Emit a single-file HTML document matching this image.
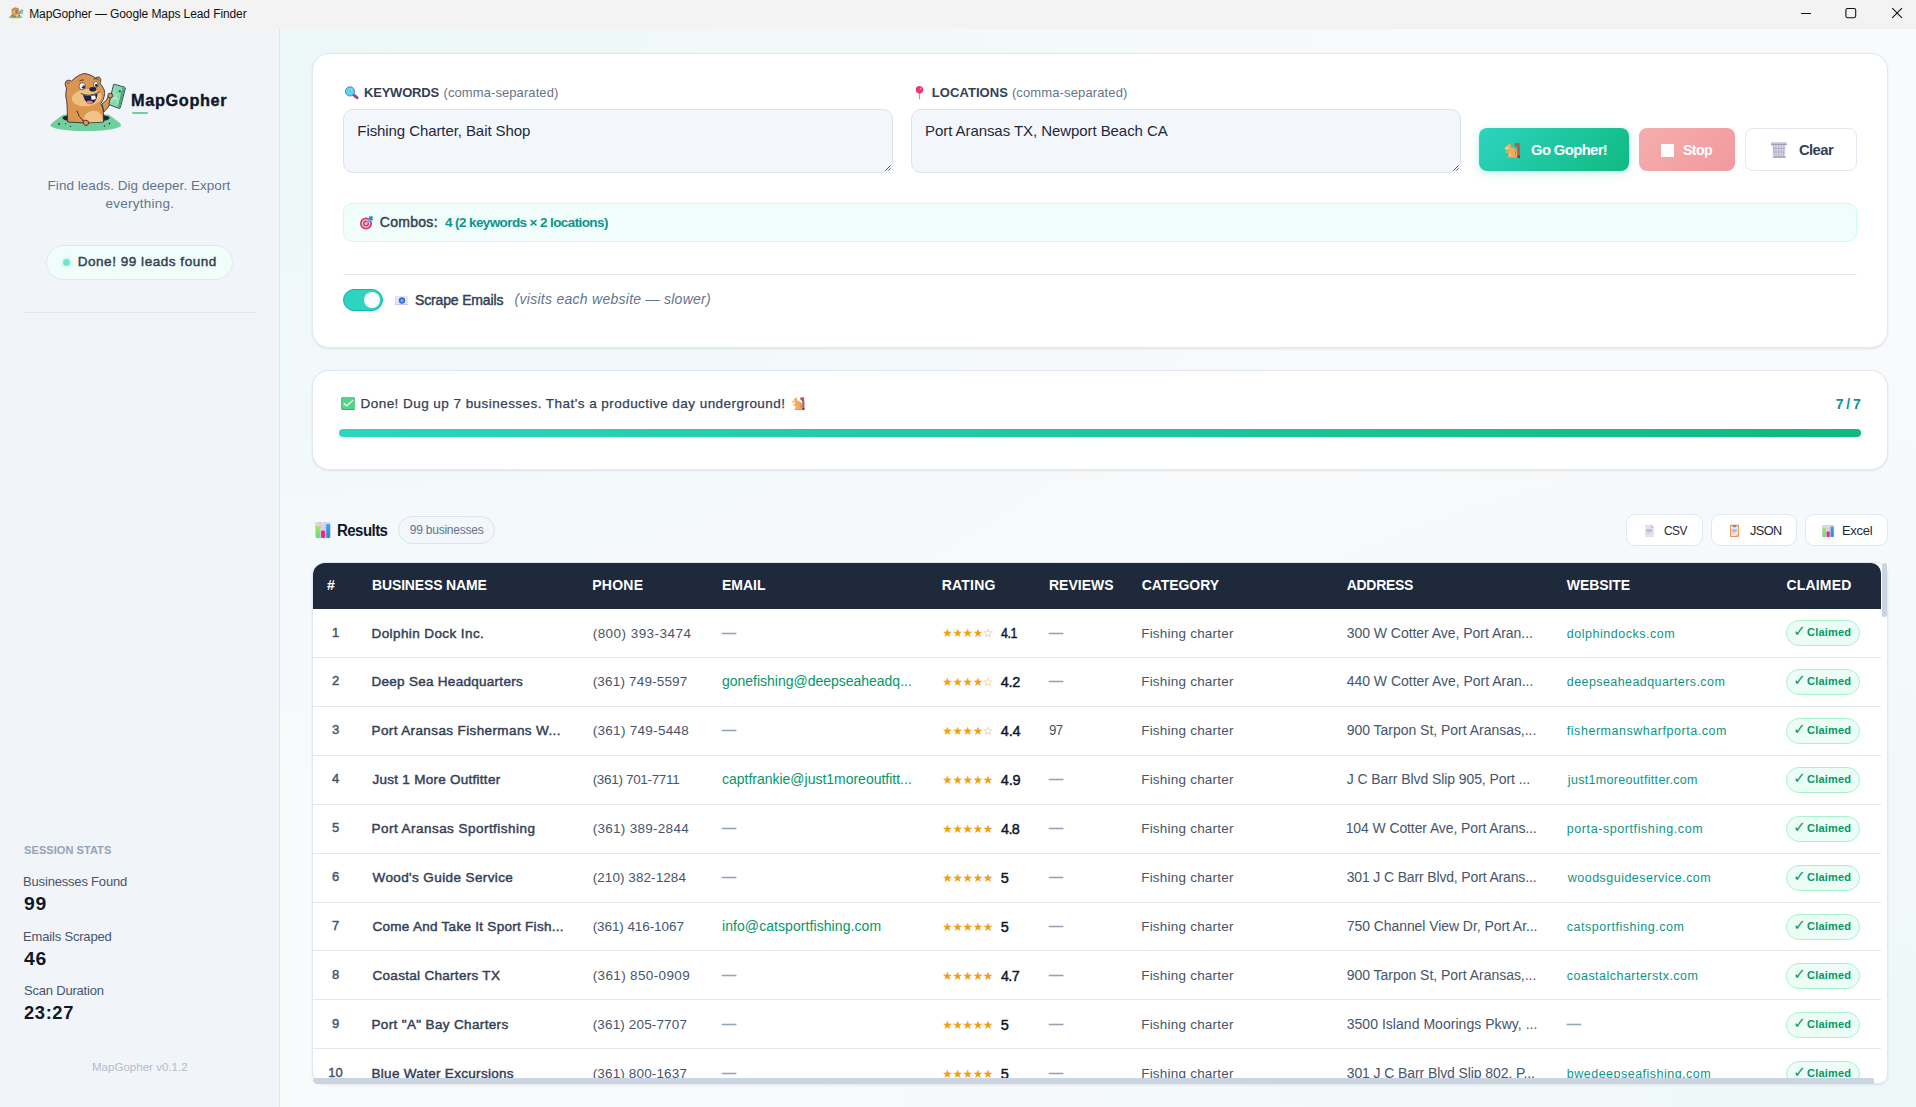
<!DOCTYPE html>
<html lang="en">
<head>
<meta charset="utf-8">
<title>MapGopher — Google Maps Lead Finder</title>
<style>
*{box-sizing:border-box;margin:0;padding:0}
html,body{width:1916px;height:1107px;overflow:hidden;background:#f8fafc}
body{font-family:"Liberation Sans",sans-serif;color:#334155;position:relative}
.a{position:absolute}
.t{position:absolute;white-space:nowrap;line-height:1}
#titlebar{position:absolute;left:0;top:0;width:1916px;height:29px;background:#f3f3f3}
#sidebar{position:absolute;left:0;top:29px;width:280px;height:1078px;background:#f1f4f9;border-right:1px solid #dfe4ee}
#main{position:absolute;left:280px;top:29px;width:1636px;height:1078px;background:radial-gradient(ellipse 1150px 760px at 0 0,rgba(45,212,191,.06),rgba(45,212,191,0) 100%),radial-gradient(ellipse 1150px 760px at 100% 100%,rgba(45,212,191,.05),rgba(45,212,191,0) 100%),#f8fafc}
.card{position:absolute;background:#fff;border:1px solid #e1e7ef;box-shadow:0 1px 3px rgba(15,23,42,.06),0 1px 2px rgba(15,23,42,.03)}
.ta{position:absolute;background:#f3f6fa;border:1px solid #dde3ec;border-radius:10px}
.rl{position:absolute;left:313px;width:1568px;height:1px;background:#e2e8f0}
.badge{position:absolute;left:1786px;width:74px;height:26px;border-radius:13px;background:#ecfdf5;border:1px solid #a7f3d0}
.xb{position:absolute;top:514px;height:32px;background:#fff;border:1px solid #e2e8f0;border-radius:9px}
svg{position:absolute;overflow:visible}
</style>
</head>
<body>
<div id="titlebar"></div>
<div id="sidebar"></div>
<div id="main"></div>

<!-- cards -->
<div class='card' style='left:312px;top:53px;width:1576px;height:295px;border-radius:17px'></div>
<div class='card' style='left:312px;top:370px;width:1576px;height:100px;border-radius:17px'></div>
<div class='card' style='left:312px;top:562px;width:1576px;height:522px;border-radius:13px 13px 9px 13px'></div>
<!-- sidebar pill -->
<div class='a' style='left:46px;top:245px;width:187px;height:35px;border-radius:18px;background:#f0fdfa;border:1px solid #e0e8ef'></div>
<div class='a' style='left:63.3px;top:259.4px;width:6.4px;height:6.4px;border-radius:4px;background:#6ee7d0;box-shadow:0 0 4px #99f6e4'></div>
<div class='a' style='left:24px;top:312px;width:232px;height:1px;background:#e2e8f0'></div>
<div class='a' style='left:132px;top:112px;width:16px;height:2px;border-radius:1px;background:#6fd09c'></div>
<!-- textareas -->
<div class='ta' style='left:343px;top:109px;width:550px;height:64px'></div>
<div class='ta' style='left:911px;top:109px;width:550px;height:64px'></div>
<svg width='1916' height='200' style='left:0;top:0'><path d='M885.5,170.5L890.5,165.5M888.5,170.5L890.5,168.5M1453.5,170.5L1458.5,165.5M1456.5,170.5L1458.5,168.5' stroke='#3b3f46' stroke-width='.9'/></svg>
<!-- buttons -->
<div class='a' style='left:1479px;top:128px;width:150px;height:43px;border-radius:8px;background:linear-gradient(135deg,#2dd4bf,#10b981);box-shadow:0 2px 9px rgba(20,184,166,.26)'></div>
<div class='a' style='left:1639px;top:128px;width:96px;height:43px;border-radius:8px;background:linear-gradient(135deg,#f6adad,#f19a9d)'></div>
<div class='a' style='left:1745px;top:128px;width:112px;height:43px;border-radius:8px;background:#fff;border:1px solid #e2e8f0'></div>
<div class='a' style='left:1661.3px;top:144px;width:12.9px;height:13px;background:#fff'></div>
<!-- combos -->
<div class='a' style='left:343px;top:203px;width:1514px;height:39px;border-radius:9px;background:#f0fdfa;border:1px solid #ccfbf1'></div>
<div class='a' style='left:343px;top:274px;width:1514px;height:1px;background:#e2e8f0'></div>
<!-- toggle -->
<div class='a' style='left:343px;top:289px;width:40px;height:22px;border-radius:11px;background:#2dd4bf;border:1px solid #19b5a3'></div>
<div class='a' style='left:364px;top:292px;width:16px;height:16px;border-radius:8px;background:#fff'></div>
<!-- progress -->
<div class='a' style='left:339px;top:429px;width:1522px;height:8px;border-radius:4px;background:linear-gradient(90deg,#2dd4bf,#10b981)'></div>
<!-- results header -->
<div class='a' style='left:398px;top:516px;width:97px;height:28px;border-radius:14px;background:#f3f6fa;border:1px solid #dde4ed'></div>
<div class='xb' style='left:1626px;width:77px'></div>
<div class='xb' style='left:1711px;width:86px'></div>
<div class='xb' style='left:1805px;width:83px'></div>
<!-- table header -->
<div class='a' style='left:313px;top:563px;width:1568px;height:46px;background:#1e293b;border-radius:12px 10px 0 0'></div>
<svg width='1916' height='1107' style='left:0;top:0' viewBox='0 0 1916 1107'><defs><linearGradient id='gG' x1='0' y1='0' x2='0' y2='1'><stop offset='0' stop-color='#a6e857'/><stop offset='1' stop-color='#62dc8c'/></linearGradient><linearGradient id='gB' x1='0' y1='0' x2='0' y2='1'><stop offset='0' stop-color='#34a7f6'/><stop offset='1' stop-color='#3a80d8'/></linearGradient></defs><g>
<path d='M50.6,126.2 Q50,124.6 52,123 L61.8,115.6 Q63.2,114.5 65.2,114.5 L106.8,114.5 Q108.8,114.5 110.3,115.7 L119.8,123 Q121.6,124.6 120.8,126.2 Q114,130.9 85.6,130.9 Q57,130.9 50.6,126.2 Z' fill='#6fd09c'/>
<ellipse cx='86' cy='118' rx='23.6' ry='4.3' fill='#1b2444'/>
<circle cx='59' cy='124' r='.9' fill='#1b2444'/><circle cx='65.5' cy='123.8' r='.6' fill='#1b2444'/><circle cx='70.5' cy='126.3' r='.6' fill='#1b2444'/><circle cx='104.5' cy='126' r='.7' fill='#1b2444'/><circle cx='109.5' cy='123.6' r='.8' fill='#1b2444'/>
<path d='M102,104 Q107,101 108.8,95.5 L112.4,97 Q112,104 103.8,112 Z' fill='#db9650' stroke='#2c2340' stroke-width='.85' stroke-linejoin='round'/>
<path d='M67.8,122 C67,112 67.4,106 66.6,100.5 C65.4,97 65.6,93 66.6,88 C65.4,86.5 64.6,83.5 65.8,81.6 C67.2,79.6 70,80 71.4,81.2 C74.5,78 79,74.6 84,73.5 C88.5,73.8 92.5,76 95.6,78 C96.8,76.6 99.4,76.6 100.4,78.4 C101.2,80 100.6,82 99.8,83 C102.6,86.5 105.2,90.5 104.6,93.5 C104.4,98 102.4,101.5 100.6,103.8 C103,107 103.8,111 103.6,122 Q86,124 67.8,122 Z' fill='#db9650' stroke='#2c2340' stroke-width='.85' stroke-linejoin='round'/>
<circle cx='68.2' cy='83' r='1.6' fill='#b9743a'/><circle cx='98.4' cy='79.8' r='1.3' fill='#b9743a'/>
<ellipse cx='86.8' cy='97.6' rx='15' ry='8.6' transform='rotate(-6 86.8 97.6)' fill='#efc07f'/>
<path d='M83,121.8 Q83.5,111.5 93.5,110.4 Q102.5,111 103,121.6 Q93,123 83,121.8 Z' fill='#f0c385'/>
<ellipse cx='82.3' cy='86.3' rx='3.2' ry='3.5' fill='#fff' stroke='#1b2444' stroke-width='.6'/>
<circle cx='83.4' cy='87' r='1.8' fill='#1b2444'/><circle cx='82.8' cy='86.2' r='.6' fill='#fff'/>
<ellipse cx='95.9' cy='84.6' rx='2.2' ry='3' fill='#fff' stroke='#1b2444' stroke-width='.6'/>
<circle cx='96.4' cy='85.4' r='1.4' fill='#1b2444'/>
<path d='M79.6,81 Q81.4,79.4 83.4,80' stroke='#1b2444' stroke-width='.8' fill='none' stroke-linecap='round'/>
<path d='M94,79 Q95.6,78 97.4,79' stroke='#1b2444' stroke-width='.8' fill='none' stroke-linecap='round'/>
<ellipse cx='92.8' cy='89.3' rx='3.4' ry='2.3' fill='#1b2444'/>
<path d='M81,93.6 Q89,97.8 99.4,92' stroke='#1b2444' stroke-width='.8' fill='none' stroke-linecap='round'/><path d='M83,94.8 Q89.4,97.4 97.6,93.4 Q96.6,103.2 90,104.2 Q85,103.4 83,94.8 Z' fill='#1b2444'/>
<ellipse cx='89.6' cy='102.2' rx='3.1' ry='1.7' fill='#f07a7a'/>
<rect x='91.3' y='95.6' width='4.3' height='3.9' rx='.6' transform='rotate(-8 93.4 97.5)' fill='#fff'/>
<path d='M76.8,110.6 Q78.5,117 83.5,121' stroke='#2c2340' stroke-width='.85' fill='none'/>
<path d='M83.2,120.4 Q86,119.4 88.4,121.4 Q89.6,123.6 87.2,125.4 Q84.4,126 83.4,123.4 Z' fill='#db9650' stroke='#2c2340' stroke-width='.85'/>
<path d='M114.6,84.3 L124.6,87.2 Q125.6,87.6 125.3,88.7 L120.3,107.6 Q119.9,108.8 118.8,108.4 L109.6,104.8 Q108.7,104.4 109,103.4 L113.4,85 Q113.7,84 114.6,84.3 Z' fill='#86d9aa' stroke='#1b2444' stroke-width='.8' stroke-linejoin='round'/>
<path d='M122.6,87 L125,87.8 L119.9,108 L117.6,107.2 Z' fill='#3fae78'/>
<path d='M111,102 L121.6,90 M113.4,90 L118.4,104.6 M110.6,98 L120,99' stroke='#e7faef' stroke-width='.5' fill='none'/>
<circle cx='119.8' cy='91.4' r='1.1' fill='#1b2444'/><circle cx='119.8' cy='91.4' r='.4' fill='#e7faef'/>
<circle cx='110.2' cy='95.6' r='2.4' fill='#db9650' stroke='#2c2340' stroke-width='.85'/>
</g><g transform='translate(8.8,7.4) scale(0.19) translate(-50.2,-73.5)'>
<path d='M50.6,126.2 Q50,124.6 52,123 L61.8,115.6 Q63.2,114.5 65.2,114.5 L106.8,114.5 Q108.8,114.5 110.3,115.7 L119.8,123 Q121.6,124.6 120.8,126.2 Q114,130.9 85.6,130.9 Q57,130.9 50.6,126.2 Z' fill='#6fd09c'/>
<ellipse cx='86' cy='118' rx='23.6' ry='4.3' fill='#1b2444'/>
<circle cx='59' cy='124' r='.9' fill='#1b2444'/><circle cx='65.5' cy='123.8' r='.6' fill='#1b2444'/><circle cx='70.5' cy='126.3' r='.6' fill='#1b2444'/><circle cx='104.5' cy='126' r='.7' fill='#1b2444'/><circle cx='109.5' cy='123.6' r='.8' fill='#1b2444'/>
<path d='M102,104 Q107,101 108.8,95.5 L112.4,97 Q112,104 103.8,112 Z' fill='#db9650' stroke='#2c2340' stroke-width='.85' stroke-linejoin='round'/>
<path d='M67.8,122 C67,112 67.4,106 66.6,100.5 C65.4,97 65.6,93 66.6,88 C65.4,86.5 64.6,83.5 65.8,81.6 C67.2,79.6 70,80 71.4,81.2 C74.5,78 79,74.6 84,73.5 C88.5,73.8 92.5,76 95.6,78 C96.8,76.6 99.4,76.6 100.4,78.4 C101.2,80 100.6,82 99.8,83 C102.6,86.5 105.2,90.5 104.6,93.5 C104.4,98 102.4,101.5 100.6,103.8 C103,107 103.8,111 103.6,122 Q86,124 67.8,122 Z' fill='#db9650' stroke='#2c2340' stroke-width='.85' stroke-linejoin='round'/>
<circle cx='68.2' cy='83' r='1.6' fill='#b9743a'/><circle cx='98.4' cy='79.8' r='1.3' fill='#b9743a'/>
<ellipse cx='86.8' cy='97.6' rx='15' ry='8.6' transform='rotate(-6 86.8 97.6)' fill='#efc07f'/>
<path d='M83,121.8 Q83.5,111.5 93.5,110.4 Q102.5,111 103,121.6 Q93,123 83,121.8 Z' fill='#f0c385'/>
<ellipse cx='82.3' cy='86.3' rx='3.2' ry='3.5' fill='#fff' stroke='#1b2444' stroke-width='.6'/>
<circle cx='83.4' cy='87' r='1.8' fill='#1b2444'/><circle cx='82.8' cy='86.2' r='.6' fill='#fff'/>
<ellipse cx='95.9' cy='84.6' rx='2.2' ry='3' fill='#fff' stroke='#1b2444' stroke-width='.6'/>
<circle cx='96.4' cy='85.4' r='1.4' fill='#1b2444'/>
<path d='M79.6,81 Q81.4,79.4 83.4,80' stroke='#1b2444' stroke-width='.8' fill='none' stroke-linecap='round'/>
<path d='M94,79 Q95.6,78 97.4,79' stroke='#1b2444' stroke-width='.8' fill='none' stroke-linecap='round'/>
<ellipse cx='92.8' cy='89.3' rx='3.4' ry='2.3' fill='#1b2444'/>
<path d='M81,93.6 Q89,97.8 99.4,92' stroke='#1b2444' stroke-width='.8' fill='none' stroke-linecap='round'/><path d='M83,94.8 Q89.4,97.4 97.6,93.4 Q96.6,103.2 90,104.2 Q85,103.4 83,94.8 Z' fill='#1b2444'/>
<ellipse cx='89.6' cy='102.2' rx='3.1' ry='1.7' fill='#f07a7a'/>
<rect x='91.3' y='95.6' width='4.3' height='3.9' rx='.6' transform='rotate(-8 93.4 97.5)' fill='#fff'/>
<path d='M76.8,110.6 Q78.5,117 83.5,121' stroke='#2c2340' stroke-width='.85' fill='none'/>
<path d='M83.2,120.4 Q86,119.4 88.4,121.4 Q89.6,123.6 87.2,125.4 Q84.4,126 83.4,123.4 Z' fill='#db9650' stroke='#2c2340' stroke-width='.85'/>
<path d='M114.6,84.3 L124.6,87.2 Q125.6,87.6 125.3,88.7 L120.3,107.6 Q119.9,108.8 118.8,108.4 L109.6,104.8 Q108.7,104.4 109,103.4 L113.4,85 Q113.7,84 114.6,84.3 Z' fill='#86d9aa' stroke='#1b2444' stroke-width='.8' stroke-linejoin='round'/>
<path d='M122.6,87 L125,87.8 L119.9,108 L117.6,107.2 Z' fill='#3fae78'/>
<path d='M111,102 L121.6,90 M113.4,90 L118.4,104.6 M110.6,98 L120,99' stroke='#e7faef' stroke-width='.5' fill='none'/>
<circle cx='119.8' cy='91.4' r='1.1' fill='#1b2444'/><circle cx='119.8' cy='91.4' r='.4' fill='#e7faef'/>
<circle cx='110.2' cy='95.6' r='2.4' fill='#db9650' stroke='#2c2340' stroke-width='.85'/>
</g><path d='M1801,13.5H1811' stroke='#111' stroke-width='1'/><rect x='1845.9' y='8.5' width='9.8' height='9.2' rx='1.6' fill='none' stroke='#111' stroke-width='1.1'/><path d='M1892.2,8.1L1902,17.9M1902,8.1L1892.2,17.9' stroke='#111' stroke-width='1.1'/><path d='M353.6,94.9L357,97.7' stroke='#8a4a94' stroke-width='3' stroke-linecap='round'/><circle cx='350' cy='91.4' r='4.6' fill='#62d3ee' stroke='#5a6fc0' stroke-width='.9'/><circle cx='351.6' cy='89.4' r='.9' fill='#a8e4f6'/><path d='M919.5,93V98.8' stroke='#aa9cc4' stroke-width='1.2' stroke-linecap='round'/><circle cx='919.5' cy='89.8' r='3.7' fill='#ee356f'/><circle cx='920.6' cy='88.4' r='.9' fill='#f9a3bd'/><path d='M1514.60,143.90 Q1515.20,143.00 1517.00,143.10 L1518.80,143.10 Q1520.00,143.30 1519.80,144.70 L1519.60,146.10 Q1520.00,147.10 1520.00,148.10 L1520.00,157.70 L1517.20,157.70 L1517.20,148.10 Q1517.00,146.70 1515.60,146.50 Q1514.20,145.90 1514.60,143.90 Z' fill='#a4625c'/><rect x='1517.20' y='155.50' width='2.80' height='2.40' fill='#8e2f5a'/><path d='M1508.00,157.90 L1517.20,157.90 L1517.20,151.70 Q1516.40,148.30 1513.40,147.70 L1511.20,147.30 L1510.40,143.90 Q1509.60,142.90 1508.80,143.90 L1507.40,145.30 Q1505.20,146.70 1504.80,148.30 Q1504.40,149.30 1505.20,149.70 L1508.40,149.90 L1508.20,150.90 L1505.60,151.30 Q1504.80,152.10 1505.80,152.70 L1508.40,152.70 L1508.60,156.50 L1507.40,157.10 Z' fill='#f3aa58'/><ellipse cx='1506.90' cy='148.10' rx='1.70' ry='1.60' fill='#f8cf9f'/><rect x='1508.60' y='152.70' width='2.40' height='4.40' fill='#f4b48a'/><rect x='1515.20' y='150.10' width='0.90' height='5.60' fill='#c7775a'/><rect x='1507.20' y='157.00' width='10.00' height='1.00' rx='.4' fill='#f98f3c'/><path d='M800.16,397.84 Q800.63,397.06 802.05,397.15 L803.47,397.15 Q804.41,397.32 804.25,398.54 L804.10,399.76 Q804.41,400.63 804.41,401.50 L804.41,409.85 L802.20,409.85 L802.20,401.50 Q802.05,400.28 800.94,400.11 Q799.84,399.58 800.16,397.84 Z' fill='#a4625c'/><rect x='802.20' y='407.94' width='2.21' height='2.09' fill='#8e2f5a'/><path d='M794.95,410.03 L802.20,410.03 L802.20,404.63 Q801.57,401.67 799.21,401.15 L797.48,400.80 L796.84,397.84 Q796.21,396.97 795.58,397.84 L794.48,399.06 Q792.75,400.28 792.43,401.67 Q792.12,402.54 792.75,402.89 L795.27,403.06 L795.11,403.94 L793.06,404.28 Q792.43,404.98 793.22,405.50 L795.27,405.50 L795.43,408.81 L794.48,409.33 Z' fill='#f3aa58'/><ellipse cx='794.09' cy='401.50' rx='1.34' ry='1.39' fill='#f8cf9f'/><rect x='795.43' y='405.50' width='1.89' height='3.83' fill='#f4b48a'/><rect x='800.63' y='403.24' width='0.71' height='4.87' fill='#c7775a'/><rect x='794.32' y='409.24' width='7.88' height='0.87' rx='.4' fill='#f98f3c'/><path d='M1772.2,144.6L1785.6,144.6L1784.9,156.4L1773.2,156.4Z' fill='#dcd7ea'/><path d='M1773.4,145L1774.2,156M1775.8,145L1776.2,156M1778.6,145V156M1781.4,145L1781,156M1784,145L1783.4,156M1773,148.4H1785M1773.2,152H1784.8' stroke='#a9a2c2' stroke-width='.7' fill='none'/><rect x='1771' y='142.3' width='15.8' height='2.6' rx='.8' fill='#c4c0d2'/><rect x='1771' y='144' width='15.8' height='.9' fill='#9d96b8'/><rect x='1772.8' y='156' width='12.8' height='1.9' rx='.5' fill='#b3adc8'/><circle cx='366' cy='223.5' r='6' fill='#e8325c'/><circle cx='366' cy='223.5' r='4.3' fill='#dcd2e8'/><circle cx='366' cy='223.5' r='3' fill='#e8325c'/><circle cx='366' cy='223.5' r='1.5' fill='#dcd2e8'/><path d='M366,223.5L368,221.5' stroke='#8a8f9c' stroke-width='.8'/><path d='M367.6,222L370.4,219.2' stroke='#45c3f5' stroke-width='2.4' stroke-linecap='round'/><path d='M369.6,216.6L370,219.4L372.8,220L371.6,218.2L372.6,216.8L370.8,217Z' fill='#2b7de0' stroke='#2b7de0' stroke-width='1' stroke-linejoin='round'/><rect x='395' y='296' width='13.1' height='8.9' rx='.8' fill='#ece3f7'/><rect x='395' y='304' width='13.1' height='.9' fill='#d9b8f3'/><rect x='395' y='296' width='.8' height='8.9' fill='#e3cfe0'/><circle cx='402' cy='300.5' r='3.2' fill='#2c70d6'/><circle cx='402' cy='300.5' r='1.5' fill='#a9b4e6'/><circle cx='402' cy='300.5' r='.6' fill='#2c70d6'/><rect x='341.2' y='396.9' width='13.8' height='13.1' rx='1.6' fill='#2f9f66'/><rect x='341.6' y='396.9' width='13.4' height='12.3' rx='1.5' fill='#54d48b'/><path d='M344.1,403.4L346.95,405.9L352.7,400.4' stroke='#fff' stroke-width='1.3' fill='none' stroke-linecap='round' stroke-linejoin='round'/><rect x='315.05' y='521.90' width='15.65' height='16.00' rx='1.20' fill='#ddd6e7'/><path d='M320.33,521.90V537.90M325.42,521.90V537.90M315.05,527.30H330.70M315.05,532.70H330.70' stroke='#c9c1d6' stroke-width='0.60'/><rect x='315.95' y='525.90' width='3.99' height='12.00' rx='0.80' fill='url(#gG)'/><rect x='321.03' y='530.60' width='3.99' height='7.30' rx='0.80' fill='#ea2f78'/><rect x='326.21' y='524.00' width='3.89' height='13.90' rx='0.80' fill='url(#gB)'/><rect x='1821.90' y='524.90' width='12.30' height='12.10' rx='0.94' fill='#ddd6e7'/><path d='M1826.05,524.90V537.00M1830.05,524.90V537.00M1821.90,528.98H1834.20M1821.90,533.07H1834.20' stroke='#c9c1d6' stroke-width='0.47'/><rect x='1822.61' y='527.92' width='3.13' height='9.07' rx='0.63' fill='url(#gG)'/><rect x='1826.60' y='531.48' width='3.13' height='5.52' rx='0.63' fill='#ea2f78'/><rect x='1830.67' y='526.49' width='3.06' height='10.51' rx='0.63' fill='url(#gB)'/><path d='M1645,524.8H1651.4L1654.1,527.6V537H1645Z' fill='#e6dff2'/><path d='M1651.2,524.8L1654.1,527.8H1651.2Z' fill='#bdb5cc'/><rect x='1646.6' y='529.3' width='5.4' height='2.4' fill='#bbb4c8'/><rect x='1646.6' y='532.5' width='3.5' height='1.1' fill='#cfc7dc'/><rect x='1730' y='524.8' width='8.9' height='12.2' rx='.8' fill='#e8974b'/><path d='M1731,526.2H1737.9V534.4L1736.2,536H1731Z' fill='#ece8f8'/><rect x='1732.8' y='524.9' width='3.4' height='2.3' rx='.9' fill='#8c8596'/><rect x='1732.2' y='529.2' width='4.6' height='2.8' fill='#bcb5c6'/><rect x='1732.2' y='532.8' width='3' height='1' fill='#cfc9da'/></svg>
<div class='a' style='left:0;top:0;width:1916px;height:1078px;overflow:hidden'>
<div class='badge' style='top:620.0px'></div><div class='badge' style='top:669.0px'></div><div class='rl' style='top:657.0px'></div><div class='badge' style='top:718.0px'></div><div class='rl' style='top:705.9px'></div><div class='badge' style='top:767.0px'></div><div class='rl' style='top:754.8px'></div><div class='badge' style='top:816.0px'></div><div class='rl' style='top:803.7px'></div><div class='badge' style='top:865.0px'></div><div class='rl' style='top:852.6px'></div><div class='badge' style='top:914.0px'></div><div class='rl' style='top:901.5px'></div><div class='badge' style='top:963.0px'></div><div class='rl' style='top:950.4px'></div><div class='badge' style='top:1012.0px'></div><div class='rl' style='top:999.3px'></div><div class='badge' style='top:1061.0px'></div><div class='rl' style='top:1048.2px'></div>
<div class='t ' style='left:29.20px;top:8.00px;font-size:12px;font-weight:400;color:#111;letter-spacing:-0.097px;'>MapGopher — Google Maps Lead Finder</div>
<div class='t ' style='left:131.05px;top:93.00px;font-size:15.6px;font-weight:700;color:#0f172a;letter-spacing:0.600px;transform:scaleX(1.0458);transform-origin:0 0;-webkit-text-stroke:.35px;'>MapGopher</div>
<div class='t ' style='left:47.60px;top:179.00px;font-size:13.5px;font-weight:400;color:#64748b;letter-spacing:0.033px;'>Find leads. Dig deeper. Export</div>
<div class='t ' style='left:105.60px;top:197.00px;font-size:13.5px;font-weight:400;color:#64748b;letter-spacing:0.231px;'>everything.</div>
<div class='t ' style='left:77.75px;top:255.00px;font-size:13.5px;font-weight:400;color:#334155;letter-spacing:0.535px;-webkit-text-stroke:.45px;'>Done! 99 leads found</div>
<div class='t ' style='left:24.10px;top:845.00px;font-size:11px;font-weight:700;color:#94a3b8;letter-spacing:0.063px;'>SESSION STATS</div>
<div class='t ' style='left:23.10px;top:875.00px;font-size:13px;font-weight:400;color:#475569;letter-spacing:-0.188px;'>Businesses Found</div>
<div class='t ' style='left:24.10px;top:896.00px;font-size:17.5px;font-weight:700;color:#0f172a;letter-spacing:0.600px;transform:scaleX(1.1066);transform-origin:0 0;'>99</div>
<div class='t ' style='left:23.10px;top:930.00px;font-size:13px;font-weight:400;color:#475569;letter-spacing:-0.185px;'>Emails Scraped</div>
<div class='t ' style='left:24.10px;top:951.00px;font-size:17.5px;font-weight:700;color:#0f172a;letter-spacing:0.600px;transform:scaleX(1.1066);transform-origin:0 0;'>46</div>
<div class='t ' style='left:24.10px;top:984.00px;font-size:13px;font-weight:400;color:#475569;letter-spacing:-0.212px;'>Scan Duration</div>
<div class='t ' style='left:24.10px;top:1005.00px;font-size:17.5px;font-weight:700;color:#0f172a;letter-spacing:0.600px;transform:scaleX(1.0468);transform-origin:0 0;'>23:27</div>
<div class='t ' style='left:92.00px;top:1062.00px;font-size:11.5px;font-weight:400;color:#b3bccb;letter-spacing:0.023px;'>MapGopher v0.1.2</div>
<div class='t ' style='left:364.00px;top:86.00px;font-size:13px;font-weight:700;color:#334155;letter-spacing:-0.213px;'>KEYWORDS</div>
<div class='t ' style='left:443.50px;top:86.00px;font-size:13px;font-weight:400;color:#64748b;letter-spacing:0.088px;'>(comma-separated)</div>
<div class='t ' style='left:931.80px;top:86.00px;font-size:13px;font-weight:700;color:#334155;letter-spacing:0.060px;'>LOCATIONS</div>
<div class='t ' style='left:1011.90px;top:86.00px;font-size:13px;font-weight:400;color:#64748b;letter-spacing:0.125px;'>(comma-separated)</div>
<div class='t ' style='left:357.30px;top:123.00px;font-size:15px;font-weight:400;color:#1e293b;letter-spacing:-0.082px;'>Fishing Charter, Bait Shop</div>
<div class='t ' style='left:925.00px;top:123.00px;font-size:15px;font-weight:400;color:#1e293b;letter-spacing:-0.066px;'>Port Aransas TX, Newport Beach CA</div>
<div class='t ' style='left:1531.20px;top:142.00px;font-size:15px;font-weight:700;color:#fff;letter-spacing:-0.600px;transform:scaleX(0.9853);transform-origin:0 0;'>Go Gopher!</div>
<div class='t ' style='left:1683.00px;top:142.00px;font-size:15px;font-weight:700;color:#fff;letter-spacing:-0.600px;transform:scaleX(0.9406);transform-origin:0 0;'>Stop</div>
<div class='t ' style='left:1798.50px;top:142.00px;font-size:15px;font-weight:700;color:#334155;letter-spacing:-0.600px;transform:scaleX(0.9863);transform-origin:0 0;'>Clear</div>
<div class='t ' style='left:379.85px;top:215.00px;font-size:14px;font-weight:400;color:#334155;letter-spacing:0.278px;-webkit-text-stroke:.45px;'>Combos:</div>
<div class='t ' style='left:444.70px;top:216.00px;font-size:13.5px;font-weight:700;color:#0d9488;letter-spacing:-0.600px;transform:scaleX(0.9994);transform-origin:0 0;'>4 (2 keywords × 2 locations)</div>
<div class='t ' style='left:414.95px;top:293.00px;font-size:14px;font-weight:400;color:#334155;letter-spacing:-0.146px;-webkit-text-stroke:.45px;'>Scrape Emails</div>
<div class='t ' style='left:514.60px;top:292.00px;font-size:14px;font-weight:400;color:#64748b;letter-spacing:0.269px;font-style:italic;'>(visits each website — slower)</div>
<div class='t ' style='left:360.50px;top:397.00px;font-size:13.5px;font-weight:400;color:#334155;letter-spacing:0.454px;-webkit-text-stroke:.25px;'>Done! Dug up 7 businesses. That&#x27;s a productive day underground!</div>
<div class='t ' style='left:1835.80px;top:397.00px;font-size:14px;font-weight:700;color:#0d9488;letter-spacing:-0.564px;'>7 / 7</div>
<div class='t ' style='left:336.76px;top:523.00px;font-size:16px;font-weight:700;color:#0f172a;letter-spacing:-0.600px;transform:scaleX(0.9400);transform-origin:0 0;'>Results</div>
<div class='t ' style='left:409.70px;top:524.00px;font-size:12px;font-weight:400;color:#64748b;letter-spacing:-0.218px;'>99 businesses</div>
<div class='t ' style='left:1664.00px;top:524.00px;font-size:13px;font-weight:400;color:#1e293b;letter-spacing:-0.600px;transform:scaleX(0.9126);transform-origin:0 0;'>CSV</div>
<div class='t ' style='left:1749.60px;top:524.00px;font-size:13px;font-weight:400;color:#1e293b;letter-spacing:-0.600px;transform:scaleX(0.9790);transform-origin:0 0;'>JSON</div>
<div class='t ' style='left:1842.00px;top:524.00px;font-size:13px;font-weight:400;color:#1e293b;letter-spacing:-0.300px;'>Excel</div>
<div class='t ' style='left:327.00px;top:578.00px;font-size:14px;font-weight:700;color:#fff;'>#</div>
<div class='t ' style='left:372.10px;top:578.00px;font-size:14px;font-weight:700;color:#fff;letter-spacing:-0.170px;'>BUSINESS NAME</div>
<div class='t ' style='left:592.30px;top:578.00px;font-size:14px;font-weight:700;color:#fff;letter-spacing:0.238px;'>PHONE</div>
<div class='t ' style='left:722.00px;top:578.00px;font-size:14px;font-weight:700;color:#fff;letter-spacing:0.000px;'>EMAIL</div>
<div class='t ' style='left:941.70px;top:578.00px;font-size:14px;font-weight:700;color:#fff;letter-spacing:0.233px;'>RATING</div>
<div class='t ' style='left:1048.90px;top:578.00px;font-size:14px;font-weight:700;color:#fff;letter-spacing:0.029px;'>REVIEWS</div>
<div class='t ' style='left:1141.80px;top:578.00px;font-size:14px;font-weight:700;color:#fff;letter-spacing:-0.077px;'>CATEGORY</div>
<div class='t ' style='left:1346.70px;top:578.00px;font-size:14px;font-weight:700;color:#fff;letter-spacing:-0.286px;'>ADDRESS</div>
<div class='t ' style='left:1566.80px;top:578.00px;font-size:14px;font-weight:700;color:#fff;letter-spacing:-0.074px;'>WEBSITE</div>
<div class='t ' style='left:1786.50px;top:578.00px;font-size:14px;font-weight:700;color:#fff;letter-spacing:0.173px;'>CLAIMED</div>
<div class='t ' style='left:331.90px;top:626.00px;font-size:13px;font-weight:400;color:#475569;-webkit-text-stroke:.45px;'>1</div>
<div class='t ' style='left:371.50px;top:627.00px;font-size:13.5px;font-weight:400;color:#334155;letter-spacing:0.406px;-webkit-text-stroke:.45px;'>Dolphin Dock Inc.</div>
<div class='t ' style='left:592.70px;top:627.00px;font-size:13.5px;font-weight:400;color:#475569;letter-spacing:0.453px;'>(800) 393-3474</div>
<div class='t ' style='left:722.00px;top:625.00px;font-size:14px;font-weight:400;color:#94a3b8;-webkit-text-stroke:.5px;'>—</div>
<div class='t ' style='left:942.30px;top:628.00px;font-size:11.7px;font-weight:400;color:#f59e0b;letter-spacing:-0.353px;font-family:"DejaVu Sans",sans-serif;'>★★★★☆</div>
<div class='t ' style='left:1000.85px;top:626.00px;font-size:14.5px;font-weight:400;color:#0f172a;letter-spacing:-0.600px;transform:scaleX(0.8628);transform-origin:0 0;-webkit-text-stroke:.6px;-webkit-text-stroke:.45px;'>4.1</div>
<div class='t ' style='left:1049.00px;top:625.00px;font-size:14px;font-weight:400;color:#94a3b8;-webkit-text-stroke:.5px;'>—</div>
<div class='t ' style='left:1141.20px;top:627.00px;font-size:13.5px;font-weight:400;color:#475569;letter-spacing:0.215px;'>Fishing charter</div>
<div class='t ' style='left:1346.70px;top:626.00px;font-size:14px;font-weight:400;color:#475569;letter-spacing:-0.036px;'>300 W Cotter Ave, Port Aran...</div>
<div class='t ' style='left:1566.80px;top:628.00px;font-size:12.5px;font-weight:400;color:#0d9488;letter-spacing:0.517px;'>dolphindocks.com</div>
<div class='t ' style='left:1793.20px;top:624.00px;font-size:15px;font-weight:700;color:#059669;font-family:"DejaVu Sans",sans-serif;'>✓</div>
<div class='t ' style='left:1807.00px;top:627.00px;font-size:11px;font-weight:700;color:#059669;letter-spacing:0.205px;'>Claimed</div>
<div class='t ' style='left:331.90px;top:674.00px;font-size:13px;font-weight:400;color:#475569;-webkit-text-stroke:.45px;'>2</div>
<div class='t ' style='left:371.50px;top:675.00px;font-size:13.5px;font-weight:400;color:#334155;letter-spacing:0.280px;-webkit-text-stroke:.45px;'>Deep Sea Headquarters</div>
<div class='t ' style='left:592.70px;top:675.00px;font-size:13.5px;font-weight:400;color:#475569;letter-spacing:0.176px;'>(361) 749-5597</div>
<div class='t ' style='left:722.00px;top:674.00px;font-size:14px;font-weight:400;color:#059669;letter-spacing:-0.014px;'>gonefishing@deepseaheadq...</div>
<div class='t ' style='left:942.30px;top:677.00px;font-size:11.7px;font-weight:400;color:#f59e0b;letter-spacing:-0.353px;font-family:"DejaVu Sans",sans-serif;'>★★★★☆</div>
<div class='t ' style='left:1000.85px;top:675.00px;font-size:14.5px;font-weight:400;color:#0f172a;letter-spacing:-0.396px;-webkit-text-stroke:.6px;-webkit-text-stroke:.45px;'>4.2</div>
<div class='t ' style='left:1049.00px;top:673.00px;font-size:14px;font-weight:400;color:#94a3b8;-webkit-text-stroke:.5px;'>—</div>
<div class='t ' style='left:1141.20px;top:675.00px;font-size:13.5px;font-weight:400;color:#475569;letter-spacing:0.215px;'>Fishing charter</div>
<div class='t ' style='left:1346.70px;top:674.00px;font-size:14px;font-weight:400;color:#475569;letter-spacing:-0.022px;'>440 W Cotter Ave, Port Aran...</div>
<div class='t ' style='left:1566.80px;top:676.00px;font-size:12.5px;font-weight:400;color:#0d9488;letter-spacing:0.423px;'>deepseaheadquarters.com</div>
<div class='t ' style='left:1793.20px;top:673.00px;font-size:15px;font-weight:700;color:#059669;font-family:"DejaVu Sans",sans-serif;'>✓</div>
<div class='t ' style='left:1807.00px;top:676.00px;font-size:11px;font-weight:700;color:#059669;letter-spacing:0.205px;'>Claimed</div>
<div class='t ' style='left:331.90px;top:723.00px;font-size:13px;font-weight:400;color:#475569;-webkit-text-stroke:.45px;'>3</div>
<div class='t ' style='left:371.50px;top:724.00px;font-size:13.5px;font-weight:400;color:#334155;letter-spacing:0.385px;-webkit-text-stroke:.45px;'>Port Aransas Fishermans W...</div>
<div class='t ' style='left:592.70px;top:724.00px;font-size:13.5px;font-weight:400;color:#475569;letter-spacing:0.292px;'>(361) 749-5448</div>
<div class='t ' style='left:722.00px;top:722.00px;font-size:14px;font-weight:400;color:#94a3b8;-webkit-text-stroke:.5px;'>—</div>
<div class='t ' style='left:942.30px;top:726.00px;font-size:11.7px;font-weight:400;color:#f59e0b;letter-spacing:-0.353px;font-family:"DejaVu Sans",sans-serif;'>★★★★☆</div>
<div class='t ' style='left:1000.85px;top:724.00px;font-size:14.5px;font-weight:400;color:#0f172a;letter-spacing:-0.196px;-webkit-text-stroke:.6px;-webkit-text-stroke:.45px;'>4.4</div>
<div class='t ' style='left:1049.00px;top:723.00px;font-size:14px;font-weight:400;color:#475569;letter-spacing:-0.600px;transform:scaleX(0.9548);transform-origin:0 0;'>97</div>
<div class='t ' style='left:1141.20px;top:724.00px;font-size:13.5px;font-weight:400;color:#475569;letter-spacing:0.215px;'>Fishing charter</div>
<div class='t ' style='left:1346.70px;top:723.00px;font-size:14px;font-weight:400;color:#475569;letter-spacing:-0.025px;'>900 Tarpon St, Port Aransas,...</div>
<div class='t ' style='left:1566.80px;top:725.00px;font-size:12.5px;font-weight:400;color:#0d9488;letter-spacing:0.536px;'>fishermanswharfporta.com</div>
<div class='t ' style='left:1793.20px;top:722.00px;font-size:15px;font-weight:700;color:#059669;font-family:"DejaVu Sans",sans-serif;'>✓</div>
<div class='t ' style='left:1807.00px;top:725.00px;font-size:11px;font-weight:700;color:#059669;letter-spacing:0.205px;'>Claimed</div>
<div class='t ' style='left:331.90px;top:772.00px;font-size:13px;font-weight:400;color:#475569;-webkit-text-stroke:.45px;'>4</div>
<div class='t ' style='left:372.50px;top:773.00px;font-size:13.5px;font-weight:400;color:#334155;letter-spacing:0.268px;-webkit-text-stroke:.45px;'>Just 1 More Outfitter</div>
<div class='t ' style='left:592.70px;top:773.00px;font-size:13.5px;font-weight:400;color:#475569;letter-spacing:-0.331px;'>(361) 701-7711</div>
<div class='t ' style='left:722.00px;top:772.00px;font-size:14px;font-weight:400;color:#059669;letter-spacing:-0.013px;'>captfrankie@just1moreoutfitt...</div>
<div class='t ' style='left:942.30px;top:775.00px;font-size:11.7px;font-weight:400;color:#f59e0b;letter-spacing:-0.353px;font-family:"DejaVu Sans",sans-serif;'>★★★★★</div>
<div class='t ' style='left:1000.85px;top:773.00px;font-size:14.5px;font-weight:400;color:#0f172a;letter-spacing:-0.196px;-webkit-text-stroke:.6px;-webkit-text-stroke:.45px;'>4.9</div>
<div class='t ' style='left:1049.00px;top:771.00px;font-size:14px;font-weight:400;color:#94a3b8;-webkit-text-stroke:.5px;'>—</div>
<div class='t ' style='left:1141.20px;top:773.00px;font-size:13.5px;font-weight:400;color:#475569;letter-spacing:0.215px;'>Fishing charter</div>
<div class='t ' style='left:1346.70px;top:772.00px;font-size:14px;font-weight:400;color:#475569;letter-spacing:-0.080px;'>J C Barr Blvd Slip 905, Port ...</div>
<div class='t ' style='left:1567.80px;top:774.00px;font-size:12.5px;font-weight:400;color:#0d9488;letter-spacing:0.321px;'>just1moreoutfitter.com</div>
<div class='t ' style='left:1793.20px;top:771.00px;font-size:15px;font-weight:700;color:#059669;font-family:"DejaVu Sans",sans-serif;'>✓</div>
<div class='t ' style='left:1807.00px;top:774.00px;font-size:11px;font-weight:700;color:#059669;letter-spacing:0.205px;'>Claimed</div>
<div class='t ' style='left:331.90px;top:821.00px;font-size:13px;font-weight:400;color:#475569;-webkit-text-stroke:.45px;'>5</div>
<div class='t ' style='left:371.50px;top:822.00px;font-size:13.5px;font-weight:400;color:#334155;letter-spacing:0.462px;-webkit-text-stroke:.45px;'>Port Aransas Sportfishing</div>
<div class='t ' style='left:592.70px;top:822.00px;font-size:13.5px;font-weight:400;color:#475569;letter-spacing:0.284px;'>(361) 389-2844</div>
<div class='t ' style='left:722.00px;top:820.00px;font-size:14px;font-weight:400;color:#94a3b8;-webkit-text-stroke:.5px;'>—</div>
<div class='t ' style='left:942.30px;top:824.00px;font-size:11.7px;font-weight:400;color:#f59e0b;letter-spacing:-0.353px;font-family:"DejaVu Sans",sans-serif;'>★★★★★</div>
<div class='t ' style='left:1000.85px;top:822.00px;font-size:14.5px;font-weight:400;color:#0f172a;letter-spacing:-0.600px;transform:scaleX(0.9951);transform-origin:0 0;-webkit-text-stroke:.6px;-webkit-text-stroke:.45px;'>4.8</div>
<div class='t ' style='left:1049.00px;top:820.00px;font-size:14px;font-weight:400;color:#94a3b8;-webkit-text-stroke:.5px;'>—</div>
<div class='t ' style='left:1141.20px;top:822.00px;font-size:13.5px;font-weight:400;color:#475569;letter-spacing:0.215px;'>Fishing charter</div>
<div class='t ' style='left:1345.70px;top:821.00px;font-size:14px;font-weight:400;color:#475569;letter-spacing:-0.108px;'>104 W Cotter Ave, Port Arans...</div>
<div class='t ' style='left:1566.80px;top:823.00px;font-size:12.5px;font-weight:400;color:#0d9488;letter-spacing:0.579px;'>porta-sportfishing.com</div>
<div class='t ' style='left:1793.20px;top:820.00px;font-size:15px;font-weight:700;color:#059669;font-family:"DejaVu Sans",sans-serif;'>✓</div>
<div class='t ' style='left:1807.00px;top:823.00px;font-size:11px;font-weight:700;color:#059669;letter-spacing:0.205px;'>Claimed</div>
<div class='t ' style='left:331.90px;top:870.00px;font-size:13px;font-weight:400;color:#475569;-webkit-text-stroke:.45px;'>6</div>
<div class='t ' style='left:372.50px;top:871.00px;font-size:13.5px;font-weight:400;color:#334155;letter-spacing:0.393px;-webkit-text-stroke:.45px;'>Wood&#x27;s Guide Service</div>
<div class='t ' style='left:592.70px;top:871.00px;font-size:13.5px;font-weight:400;color:#475569;letter-spacing:0.068px;'>(210) 382-1284</div>
<div class='t ' style='left:722.00px;top:869.00px;font-size:14px;font-weight:400;color:#94a3b8;-webkit-text-stroke:.5px;'>—</div>
<div class='t ' style='left:942.30px;top:873.00px;font-size:11.7px;font-weight:400;color:#f59e0b;letter-spacing:-0.353px;font-family:"DejaVu Sans",sans-serif;'>★★★★★</div>
<div class='t ' style='left:1000.85px;top:871.00px;font-size:14.5px;font-weight:400;color:#0f172a;-webkit-text-stroke:.6px;-webkit-text-stroke:.45px;'>5</div>
<div class='t ' style='left:1049.00px;top:869.00px;font-size:14px;font-weight:400;color:#94a3b8;-webkit-text-stroke:.5px;'>—</div>
<div class='t ' style='left:1141.20px;top:871.00px;font-size:13.5px;font-weight:400;color:#475569;letter-spacing:0.215px;'>Fishing charter</div>
<div class='t ' style='left:1346.70px;top:870.00px;font-size:14px;font-weight:400;color:#475569;letter-spacing:-0.149px;'>301 J C Barr Blvd, Port Arans...</div>
<div class='t ' style='left:1567.80px;top:872.00px;font-size:12.5px;font-weight:400;color:#0d9488;letter-spacing:0.476px;'>woodsguideservice.com</div>
<div class='t ' style='left:1793.20px;top:869.00px;font-size:15px;font-weight:700;color:#059669;font-family:"DejaVu Sans",sans-serif;'>✓</div>
<div class='t ' style='left:1807.00px;top:872.00px;font-size:11px;font-weight:700;color:#059669;letter-spacing:0.205px;'>Claimed</div>
<div class='t ' style='left:331.90px;top:919.00px;font-size:13px;font-weight:400;color:#475569;-webkit-text-stroke:.45px;'>7</div>
<div class='t ' style='left:372.50px;top:920.00px;font-size:13.5px;font-weight:400;color:#334155;letter-spacing:0.282px;-webkit-text-stroke:.45px;'>Come And Take It Sport Fish...</div>
<div class='t ' style='left:592.70px;top:920.00px;font-size:13.5px;font-weight:400;color:#475569;letter-spacing:-0.085px;'>(361) 416-1067</div>
<div class='t ' style='left:722.00px;top:919.00px;font-size:14px;font-weight:400;color:#059669;letter-spacing:0.073px;'>info@catsportfishing.com</div>
<div class='t ' style='left:942.30px;top:922.00px;font-size:11.7px;font-weight:400;color:#f59e0b;letter-spacing:-0.353px;font-family:"DejaVu Sans",sans-serif;'>★★★★★</div>
<div class='t ' style='left:1000.85px;top:920.00px;font-size:14.5px;font-weight:400;color:#0f172a;-webkit-text-stroke:.6px;-webkit-text-stroke:.45px;'>5</div>
<div class='t ' style='left:1049.00px;top:918.00px;font-size:14px;font-weight:400;color:#94a3b8;-webkit-text-stroke:.5px;'>—</div>
<div class='t ' style='left:1141.20px;top:920.00px;font-size:13.5px;font-weight:400;color:#475569;letter-spacing:0.215px;'>Fishing charter</div>
<div class='t ' style='left:1346.70px;top:919.00px;font-size:14px;font-weight:400;color:#475569;letter-spacing:-0.064px;'>750 Channel View Dr, Port Ar...</div>
<div class='t ' style='left:1566.80px;top:921.00px;font-size:12.5px;font-weight:400;color:#0d9488;letter-spacing:0.524px;'>catsportfishing.com</div>
<div class='t ' style='left:1793.20px;top:918.00px;font-size:15px;font-weight:700;color:#059669;font-family:"DejaVu Sans",sans-serif;'>✓</div>
<div class='t ' style='left:1807.00px;top:921.00px;font-size:11px;font-weight:700;color:#059669;letter-spacing:0.205px;'>Claimed</div>
<div class='t ' style='left:331.90px;top:968.00px;font-size:13px;font-weight:400;color:#475569;-webkit-text-stroke:.45px;'>8</div>
<div class='t ' style='left:372.50px;top:969.00px;font-size:13.5px;font-weight:400;color:#334155;letter-spacing:0.298px;-webkit-text-stroke:.45px;'>Coastal Charters TX</div>
<div class='t ' style='left:592.70px;top:969.00px;font-size:13.5px;font-weight:400;color:#475569;letter-spacing:0.361px;'>(361) 850-0909</div>
<div class='t ' style='left:722.00px;top:967.00px;font-size:14px;font-weight:400;color:#94a3b8;-webkit-text-stroke:.5px;'>—</div>
<div class='t ' style='left:942.30px;top:971.00px;font-size:11.7px;font-weight:400;color:#f59e0b;letter-spacing:-0.353px;font-family:"DejaVu Sans",sans-serif;'>★★★★★</div>
<div class='t ' style='left:1000.85px;top:969.00px;font-size:14.5px;font-weight:400;color:#0f172a;letter-spacing:-0.600px;transform:scaleX(0.9845);transform-origin:0 0;-webkit-text-stroke:.6px;-webkit-text-stroke:.45px;'>4.7</div>
<div class='t ' style='left:1049.00px;top:967.00px;font-size:14px;font-weight:400;color:#94a3b8;-webkit-text-stroke:.5px;'>—</div>
<div class='t ' style='left:1141.20px;top:969.00px;font-size:13.5px;font-weight:400;color:#475569;letter-spacing:0.215px;'>Fishing charter</div>
<div class='t ' style='left:1346.70px;top:968.00px;font-size:14px;font-weight:400;color:#475569;letter-spacing:-0.025px;'>900 Tarpon St, Port Aransas,...</div>
<div class='t ' style='left:1566.80px;top:970.00px;font-size:12.5px;font-weight:400;color:#0d9488;letter-spacing:0.477px;'>coastalcharterstx.com</div>
<div class='t ' style='left:1793.20px;top:967.00px;font-size:15px;font-weight:700;color:#059669;font-family:"DejaVu Sans",sans-serif;'>✓</div>
<div class='t ' style='left:1807.00px;top:970.00px;font-size:11px;font-weight:700;color:#059669;letter-spacing:0.205px;'>Claimed</div>
<div class='t ' style='left:331.90px;top:1017.00px;font-size:13px;font-weight:400;color:#475569;-webkit-text-stroke:.45px;'>9</div>
<div class='t ' style='left:371.50px;top:1018.00px;font-size:13.5px;font-weight:400;color:#334155;letter-spacing:0.354px;-webkit-text-stroke:.45px;'>Port &quot;A&quot; Bay Charters</div>
<div class='t ' style='left:592.70px;top:1018.00px;font-size:13.5px;font-weight:400;color:#475569;letter-spacing:0.145px;'>(361) 205-7707</div>
<div class='t ' style='left:722.00px;top:1016.00px;font-size:14px;font-weight:400;color:#94a3b8;-webkit-text-stroke:.5px;'>—</div>
<div class='t ' style='left:942.30px;top:1020.00px;font-size:11.7px;font-weight:400;color:#f59e0b;letter-spacing:-0.353px;font-family:"DejaVu Sans",sans-serif;'>★★★★★</div>
<div class='t ' style='left:1000.85px;top:1018.00px;font-size:14.5px;font-weight:400;color:#0f172a;-webkit-text-stroke:.6px;-webkit-text-stroke:.45px;'>5</div>
<div class='t ' style='left:1049.00px;top:1016.00px;font-size:14px;font-weight:400;color:#94a3b8;-webkit-text-stroke:.5px;'>—</div>
<div class='t ' style='left:1141.20px;top:1018.00px;font-size:13.5px;font-weight:400;color:#475569;letter-spacing:0.215px;'>Fishing charter</div>
<div class='t ' style='left:1346.70px;top:1017.00px;font-size:14px;font-weight:400;color:#475569;letter-spacing:0.037px;'>3500 Island Moorings Pkwy, ...</div>
<div class='t ' style='left:1566.80px;top:1016.00px;font-size:14px;font-weight:400;color:#94a3b8;-webkit-text-stroke:.5px;'>—</div>
<div class='t ' style='left:1793.20px;top:1016.00px;font-size:15px;font-weight:700;color:#059669;font-family:"DejaVu Sans",sans-serif;'>✓</div>
<div class='t ' style='left:1807.00px;top:1019.00px;font-size:11px;font-weight:700;color:#059669;letter-spacing:0.205px;'>Claimed</div>
<div class='t clip' style='left:328.29px;top:1066.00px;font-size:13px;font-weight:400;color:#475569;-webkit-text-stroke:.45px;'>10</div>
<div class='t clip' style='left:371.50px;top:1067.00px;font-size:13.5px;font-weight:400;color:#334155;letter-spacing:0.303px;-webkit-text-stroke:.45px;'>Blue Water Excursions</div>
<div class='t clip' style='left:592.70px;top:1067.00px;font-size:13.5px;font-weight:400;color:#475569;letter-spacing:0.145px;'>(361) 800-1637</div>
<div class='t clip' style='left:722.00px;top:1065.00px;font-size:14px;font-weight:400;color:#94a3b8;-webkit-text-stroke:.5px;'>—</div>
<div class='t clip' style='left:942.30px;top:1069.00px;font-size:11.7px;font-weight:400;color:#f59e0b;letter-spacing:-0.353px;font-family:"DejaVu Sans",sans-serif;'>★★★★★</div>
<div class='t clip' style='left:1000.85px;top:1067.00px;font-size:14.5px;font-weight:400;color:#0f172a;-webkit-text-stroke:.6px;-webkit-text-stroke:.45px;'>5</div>
<div class='t clip' style='left:1049.00px;top:1065.00px;font-size:14px;font-weight:400;color:#94a3b8;-webkit-text-stroke:.5px;'>—</div>
<div class='t clip' style='left:1141.20px;top:1067.00px;font-size:13.5px;font-weight:400;color:#475569;letter-spacing:0.215px;'>Fishing charter</div>
<div class='t clip' style='left:1346.70px;top:1066.00px;font-size:14px;font-weight:400;color:#475569;letter-spacing:-0.096px;'>301 J C Barr Blvd Slip 802, P...</div>
<div class='t clip' style='left:1566.80px;top:1068.00px;font-size:12.5px;font-weight:400;color:#0d9488;letter-spacing:0.490px;'>bwedeepseafishing.com</div>
<div class='t clip' style='left:1793.20px;top:1065.00px;font-size:15px;font-weight:700;color:#059669;font-family:"DejaVu Sans",sans-serif;'>✓</div>
<div class='t clip' style='left:1807.00px;top:1068.00px;font-size:11px;font-weight:700;color:#059669;letter-spacing:0.205px;'>Claimed</div>
</div>
<div class='a' style='left:1882px;top:563px;width:5px;height:54px;border-radius:3px;background:#cbd5e1'></div>
<div class='a' style='left:313px;top:1078px;width:1561px;height:6px;border-radius:3px 3px 3px 8px;background:#cbd5e1'></div>
</body>
</html>
